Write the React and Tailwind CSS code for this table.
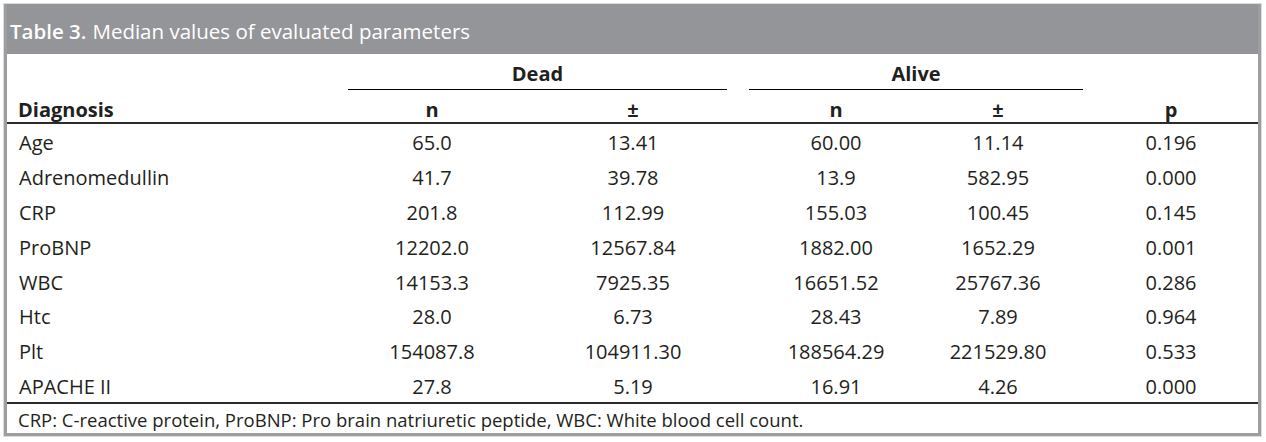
const rows = [
  ["Age", "65.0", "13.41", "60.00", "11.14", "0.196"],
  ["Adrenomedullin", "41.7", "39.78", "13.9", "582.95", "0.000"],
  ["CRP", "201.8", "112.99", "155.03", "100.45", "0.145"],
  ["ProBNP", "12202.0", "12567.84", "1882.00", "1652.29", "0.001"],
  ["WBC", "14153.3", "7925.35", "16651.52", "25767.36", "0.286"],
  ["Htc", "28.0", "6.73", "28.43", "7.89", "0.964"],
  ["Plt", "154087.8", "104911.30", "188564.29", "221529.80", "0.533"],
  ["APACHE II", "27.8", "5.19", "16.91", "4.26", "0.000"],
];

const cols = "grid grid-cols-[325px_200px_202px_204px_120px_200px]";

export default function App() {
  return (
    <div className="bg-white w-[1266px] h-[442px] pt-[3px] pl-[3px]" style={{ fontFamily: '"Open Sans", sans-serif' }}>
      <div className="w-[1259px] border border-[#dcdcdd]">
        <div className="border-[3px] border-[#9c9ea1] bg-white text-[#231f20]">
          {/* title bar */}
          <div className="bg-[#939598] h-[50px] -mt-[3px] pt-[5px] flex items-center pl-[3px] text-white text-[20.5px]">
            <span className="font-semibold">Table 3.</span>
            <span className="ml-[6px]">Median values of evaluated parameters</span>
          </div>

          {/* group header */}
          <div className="grid grid-cols-[341px_379px_22px_334px_1fr] h-[37px]">
            <div />
            <div className="flex flex-col justify-end">
              <div className="text-center font-bold text-[20px] leading-none pb-[5px]">Dead</div>
              <div className="h-[1.5px] bg-black mb-[1px]" />
            </div>
            <div />
            <div className="flex flex-col justify-end">
              <div className="text-center font-bold text-[20px] leading-none pb-[5px]">Alive</div>
              <div className="h-[1.5px] bg-black mb-[1px]" />
            </div>
            <div />
          </div>

          {/* sub header */}
          <div className={`${cols} h-[33px] pt-[4px] items-center font-bold text-[20px] border-b-2 border-[#2b2b2b]`}>
            <div className="pl-[11px]">Diagnosis</div>
            <div className="text-center">n</div>
            <div className="text-center">±</div>
            <div className="text-center">n</div>
            <div className="text-center">±</div>
            <div className="text-center pl-[26px]">p</div>
          </div>

          {/* body */}
          <div className="border-b-2 border-[#2b2b2b]">
            {rows.map((r) => (
              <div key={r[0]} className={`${cols} h-[34.8px] pt-[4px] items-center text-[20px]`}>
                <div className="pl-[12px]">{r[0]}</div>
                <div className="text-center">{r[1]}</div>
                <div className="text-center">{r[2]}</div>
                <div className="text-center">{r[3]}</div>
                <div className="text-center">{r[4]}</div>
                <div className="text-center pl-[26px]">{r[5]}</div>
              </div>
            ))}
          </div>

          {/* footnote */}
          <div className="h-[29px] pt-[2px] flex items-center pl-[11px] text-[18.5px]">
            CRP: C-reactive protein, ProBNP: Pro brain natriuretic peptide, WBC: White blood cell count.
          </div>
        </div>
      </div>
    </div>
  );
}
